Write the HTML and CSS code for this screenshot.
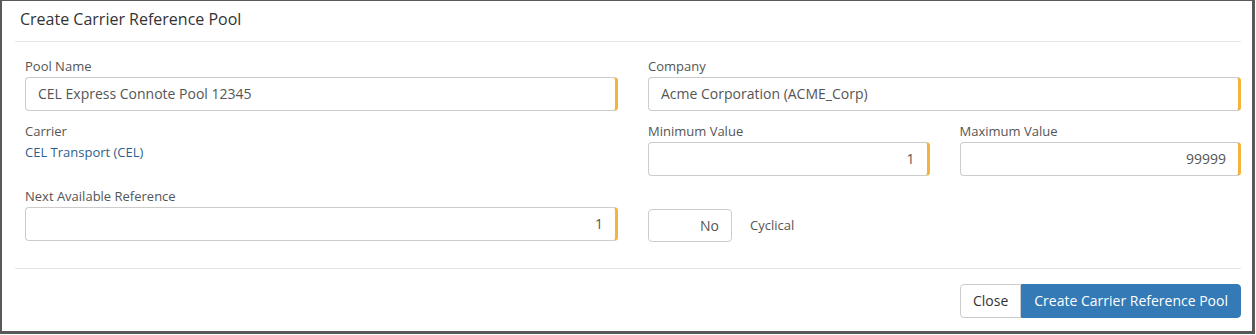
FILE: index.html
```html
<!DOCTYPE html>
<html>
<head>
<meta charset="utf-8">
<link rel="stylesheet" href="styles.css">
</head>
<body>
<div class="modal">
  <div class="modal-header">
    <h4 class="modal-title">Create Carrier Reference Pool</h4>
  </div>
  <div class="modal-body">
    <div class="cols">
      <div class="col">
        <div class="group">
          <label class="lbl">Pool Name</label>
          <div class="input req">CEL Express Connote Pool 12345</div>
        </div>
        <div class="group">
          <label class="lbl">Carrier</label>
          <div class="static">CEL Transport (CEL)</div>
        </div>
        <div class="group">
          <label class="lbl">Next Available Reference</label>
          <div class="input req num">1</div>
        </div>
      </div>
      <div class="col">
        <div class="group">
          <label class="lbl">Company</label>
          <div class="input req">Acme Corporation (ACME_Corp)</div>
        </div>
        <div class="subcols">
          <div class="group">
            <label class="lbl">Minimum Value</label>
            <div class="input req num">1</div>
          </div>
          <div class="group">
            <label class="lbl">Maximum Value</label>
            <div class="input req num">99999</div>
          </div>
        </div>
        <div class="toggle-row">
          <div class="toggle">No</div>
          <span class="toggle-label">Cyclical</span>
        </div>
      </div>
    </div>
  </div>
  <div class="modal-footer">
    <div class="btn-group">
      <button class="btn btn-default">Close</button>
      <button class="btn btn-primary">Create Carrier Reference Pool</button>
    </div>
  </div>
</div>
</body>
</html>
```
FILE: styles.css
```css
* { box-sizing: border-box; }
html, body { margin: 0; padding: 0; background: #fff; }
body {
  font-family: "Open Sans", "Liberation Sans", sans-serif;
  color: #333;
}
.modal {
  width: 1255px;
  height: 334px;
  border-style: solid;
  border-color: #595959;
  border-width: 1px 3px 3px 2px;
  background: #fff;
  display: flex;
  flex-direction: column;
}
.modal-header {
  margin: 0 11px 0 13px;
  padding: 7px 5px 11px 5px;
  border-bottom: 1px solid #e5e5e5;
}
.modal-title {
  margin: 0;
  font-size: 16px;
  font-weight: 400;
  line-height: 22px;
  color: #333;
}
.modal-body {
  margin: 0 11px 0 13px;
  padding: 15px 0 16px 10px;
  border-bottom: 1px solid #e5e5e5;
}
.cols {
  display: grid;
  grid-template-columns: 1fr 1fr;
  column-gap: 30px;
}
.subcols {
  display: grid;
  grid-template-columns: 1fr 1fr;
  column-gap: 30px;
}
.group { margin-bottom: 11px; }
.lbl {
  display: block;
  font-size: 13px;
  line-height: 18px;
  margin-bottom: 2px;
  color: #555;
}
.input {
  height: 34px;
  border: 1px solid #ccc;
  border-radius: 4px;
  padding: 0 12px;
  font-size: 14px;
  line-height: 32px;
  color: #555;
  white-space: nowrap;
}
.input.req { border-right: 3px solid #f3b33d; }
.input.num { text-align: right; padding-right: 12px; }
.static {
  font-size: 13px;
  line-height: 20px;
  color: #2e5f8f;
  height: 34px;
}
.toggle-row {
  display: flex;
  align-items: center;
  gap: 18px;
  margin-top: 22px;
}
.toggle {
  width: 84px;
  height: 33px;
  border: 1px solid #ccc;
  border-radius: 4px;
  text-align: right;
  padding: 0 12px;
  font-size: 14px;
  line-height: 31px;
  color: #555;
}
.toggle-label {
  font-size: 13px;
  color: #555;
  margin-top: -2px;
}
.modal-footer {
  margin: 0 11px 0 13px;
  padding: 15px 0 0 0;
  display: flex;
  justify-content: flex-end;
}
.btn-group { display: flex; }
.btn {
  font-family: "Open Sans", "Liberation Sans", sans-serif;
  font-size: 14px;
  line-height: 20px;
  height: 34px;
  padding: 6px 12px;
  border: 1px solid transparent;
  margin: 0;
  cursor: pointer;
}
.btn-default {
  background: #fff;
  color: #333;
  border-color: #ccc;
  border-radius: 4px 0 0 4px;
}
.btn-primary {
  background: #337ab7;
  color: #fff;
  border-color: #337ab7;
  border-radius: 0 4px 4px 0;
}
```
